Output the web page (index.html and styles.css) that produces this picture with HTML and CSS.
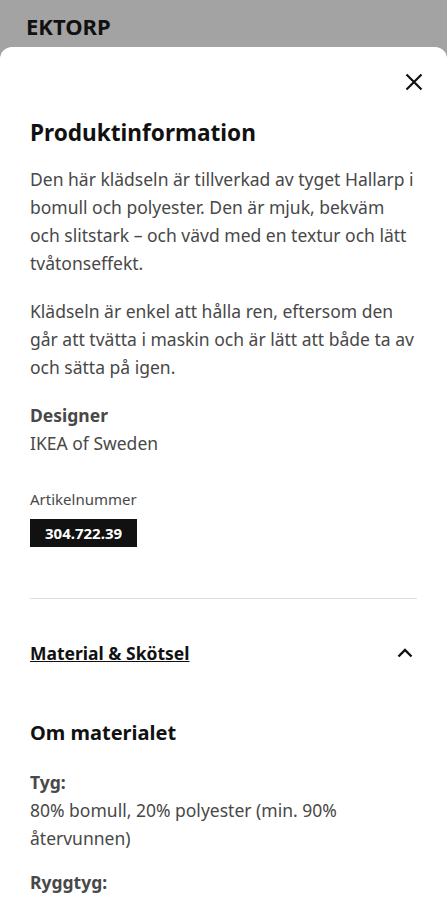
FILE: index.html
```html
<!DOCTYPE html>
<html lang="sv">
  <head>
    <meta charset="UTF-8" />
    <title>EKTORP – Produktinformation</title>
    <link rel="stylesheet" href="styles.css">
  </head>
  <body>
    <header class="page-head">
      <h1>EKTORP</h1>
    </header>

    <section class="sheet">
      <div class="sheet-top">
        <button class="close-btn" aria-label="Stäng">
          <svg width="18" height="18" viewBox="0 0 18 18">
            <path d="M1.5 1.5 L16.5 16.5 M16.5 1.5 L1.5 16.5" stroke="#111" stroke-width="2.2" fill="none" />
          </svg>
        </button>
      </div>

      <h2 class="sheet-title">Produktinformation</h2>

      <p class="text">
        Den här klädseln är tillverkad av tyget Hallarp i bomull och polyester. Den är mjuk, bekväm och slitstark – och vävd med en textur och lätt tvåtonseffekt.
      </p>
      <p class="text">
        Klädseln är enkel att hålla ren, eftersom den går att tvätta i maskin och är lätt att både ta av och sätta på igen.
      </p>

      <div class="designer">
        <div class="label">Designer</div>
        <div class="text">IKEA of Sweden</div>
      </div>

      <div class="article">
        <div class="article-label">Artikelnummer</div>
        <span class="article-no">304.722.39</span>
      </div>

      <hr class="divider" />

      <div class="accordion-head">
        <span class="accordion-title">Material &amp; Skötsel</span>
        <svg width="16" height="16" viewBox="0 0 16 16">
          <path d="M1.5 11.5 L8 5 L14.5 11.5" stroke="#111" stroke-width="2.4" fill="none" />
        </svg>
      </div>

      <h3 class="sub-title">Om materialet</h3>

      <div class="material">
        <div class="label">Tyg:</div>
        <div class="text">80% bomull, 20% polyester (min. 90% återvunnen)</div>
      </div>
      <div class="material">
        <div class="label">Ryggtyg:</div>
      </div>
    </section>
  </body>
</html>
```

FILE: styles.css
```css
body {
  margin: 0;
  font-family: "Noto Sans", Arial, sans-serif;
  background-color: #a3a3a3;
  color: #484848;
  overflow: hidden;
}
.page-head {
  padding: 8px 26px 0;
  height: 39px;
}
.page-head h1 {
  margin: 0;
  font-size: 22px;
  font-weight: 700;
  color: #111;
  line-height: 36px;
}
.sheet {
  background-color: #fff;
  border-radius: 12px 12px 0 0;
  padding: 0 30px 40px;
  min-height: 900px;
}
.sheet-top {
  display: flex;
  justify-content: flex-end;
  padding-top: 26px;
  height: 42px;
}
.close-btn {
  background: none;
  border: none;
  padding: 0;
  width: 18px;
  height: 18px;
  margin-right: -6px;
}
.sheet-title {
  margin: 0 0 14px;
  font-size: 22.6px;
  font-weight: 700;
  color: #111;
  line-height: 36px;
}
.text {
  margin: 0 0 20px;
  font-size: 17.5px;
  line-height: 28px;
}
.designer .label,
.material .label {
  font-size: 17.5px;
  font-weight: 700;
  line-height: 28px;
}
.designer {
  margin-bottom: 30px;
}
.designer .text {
  margin: 0;
}
.article-label {
  font-size: 15px;
  line-height: 24px;
  margin-bottom: 8px;
}
.article-no {
  display: inline-block;
  background-color: #111;
  color: #fff;
  font-size: 15px;
  font-weight: 700;
  padding: 3px 15px;
  line-height: 22px;
}
.divider {
  border: none;
  border-top: 1px solid #dfdfdf;
  margin: 51px 0 40px;
}
.accordion-head {
  display: flex;
  justify-content: space-between;
  align-items: center;
  padding-right: 4px;
}
.accordion-title {
  font-size: 17.5px;
  font-weight: 700;
  color: #111;
  text-decoration: underline;
  line-height: 28px;
}
.sub-title {
  margin: 51px 0 20px;
  font-size: 20px;
  font-weight: 700;
  color: #111;
  line-height: 30px;
}
.material {
  margin-bottom: 16px;
}
.material .text {
  margin: 0;
}
```
